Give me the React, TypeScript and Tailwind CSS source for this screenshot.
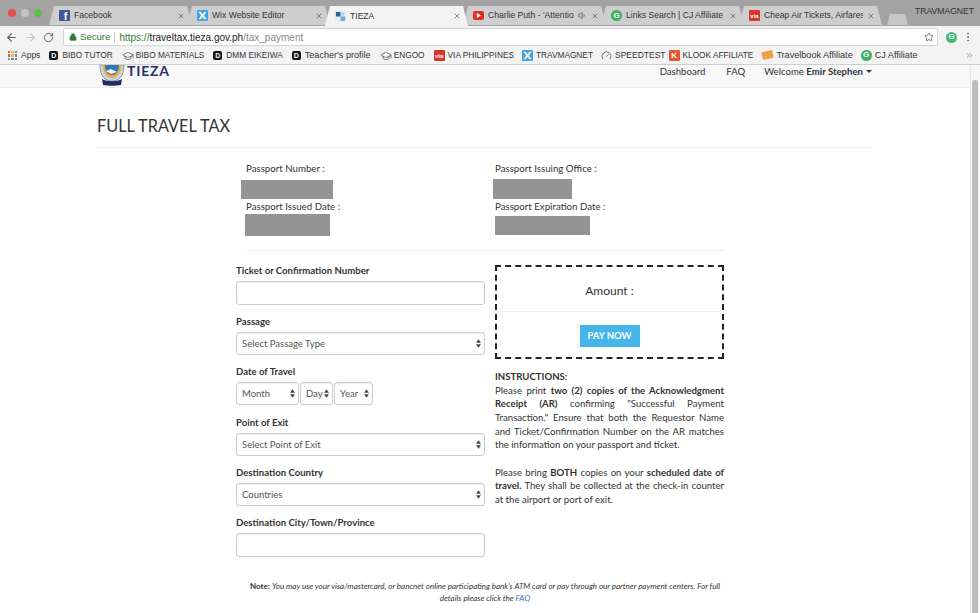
import { ArrowLeft, ArrowRight, RotateCw, Lock, Star, X, Volume1, MoreVertical, Gauge, GraduationCap, ChevronsRight } from 'lucide-react';

function Square({ bg, children }: { bg: string; children?: React.ReactNode }) {
  return (
    <span className={`flex h-[11px] w-[11px] shrink-0 items-center justify-center overflow-hidden rounded-[1px] text-white ${bg}`}>
      {children}
    </span>
  );
}

const FbIcon = () => <Square bg="bg-[#3b5998]"><span className="mt-[2px] ml-[2px] font-['Liberation_Sans',sans-serif] text-[11px] font-bold leading-none">f</span></Square>;
const WixIcon = () => (
  <Square bg="bg-[#3ea1f2]">
    <svg viewBox="0 0 12 12" className="h-[11px] w-[11px]"><path d="M1.5 2 L4 2 L6 4.5 L8 2 L10.5 2 L7.5 6 L10.5 10 L8 10 L6 7.5 L4 10 L1.5 10 L4.5 6 Z" fill="#fff3c4" /></svg>
  </Square>
);
const TiezaIcon = () => (
  <svg viewBox="0 0 12 12" className="h-[11px] w-[11px] shrink-0">
    <rect width="12" height="12" fill="#e4edf5" />
    <path d="M1 1h5v5H1z" fill="#2f5f9e" />
    <path d="M6 6h5v5H6z" fill="#7ea6d0" />
    <path d="M7 2h3v3H7z" fill="#b9cfe4" />
  </svg>
);
const YtIcon = () => (
  <span className="flex h-[9px] w-[11px] shrink-0 items-center justify-center rounded-[2px] bg-[#e52d27]">
    <svg viewBox="0 0 6 6" className="h-[5px] w-[5px]"><path d="M1 0 L6 3 L1 6 Z" fill="#fff" /></svg>
  </span>
);
const CjIcon = () => (
  <span className="flex h-[11px] w-[11px] shrink-0 items-center justify-center rounded-full bg-[#3fae66] font-['Liberation_Sans',sans-serif] text-[8px] font-bold leading-none text-white">G</span>
);
const ViaIcon = () => (
  <Square bg="bg-[#d9352a]"><span className="font-['Liberation_Sans',sans-serif] text-[6px] font-bold leading-none">via</span></Square>
);
const BlackD = () => (
  <span className="mr-px flex h-[9px] w-[9px] shrink-0 items-center justify-center rounded-[2px] bg-[#111] font-['Liberation_Sans',sans-serif] text-[7px] font-bold leading-none text-white">D</span>
);
const Cap = () => <GraduationCap className="-mr-px h-[12px] w-[12px] shrink-0 text-[#555]" strokeWidth={1.5} />;

const tabs = [
  { title: 'Facebook', icon: <FbIcon /> },
  { title: 'Wix Website Editor', icon: <WixIcon /> },
  { title: 'TIEZA', icon: <TiezaIcon />, active: true },
  { title: "Charlie Puth - 'Attention", icon: <YtIcon />, sound: true },
  { title: 'Links Search | CJ Affiliate', icon: <CjIcon /> },
  { title: 'Cheap Air Tickets, Airfares', icon: <ViaIcon /> },
];

function Tab({ title, icon, active, sound }: { title: string; icon: React.ReactNode; active?: boolean; sound?: boolean }) {
  return (
    <div
      className={`-mr-[5px] flex w-[143px] shrink-0 items-center gap-[4px] pr-[7px] pl-[10px] [clip-path:polygon(0_100%,5px_0,calc(100%-5px)_0,100%_100%)] ${active ? 'relative z-10 h-[20px] bg-[#f3f3f3]' : 'mb-px h-[19px] bg-[#cecece]'}`}
    >
      {icon}
      <span className="min-w-0 flex-1 overflow-hidden whitespace-nowrap text-[8.6px] text-[#333]">{title}</span>
      {sound && <Volume1 className="h-[9px] w-[9px] shrink-0 text-[#555]" />}
      <X className="h-[8px] w-[8px] shrink-0 text-[#555]" strokeWidth={2} />
    </div>
  );
}

const bookmarks = [
  { label: 'BIBO TUTOR', icon: <BlackD />, cls: 'ml-[9px] text-[8.3px]' },
  { label: 'BIBO MATERIALS', icon: <Cap />, cls: 'ml-[9px] text-[8.3px]' },
  { label: 'DMM EIKEIWA', icon: <BlackD />, cls: 'ml-[9px] text-[8.3px]' },
  { label: "Teacher's profile", icon: <BlackD />, cls: 'ml-[9px] text-[9.1px]' },
  { label: 'ENGOO', icon: <Cap />, cls: 'ml-[9px] text-[8.3px]' },
  { label: 'VIA PHILIPPINES', icon: <ViaIcon />, cls: 'ml-[9px] text-[8.3px]' },
  { label: 'TRAVMAGNET', icon: <WixIcon />, cls: 'ml-[8px] text-[8.3px]' },
  { label: 'SPEEDTEST', icon: <Gauge className="h-[11px] w-[11px] shrink-0 text-[#444]" strokeWidth={1.5} />, cls: 'ml-[8px] text-[8.5px]' },
  { label: 'KLOOK AFFILIATE', icon: <Square bg="bg-[#e4572e]"><span className="text-[8px] font-bold leading-none">K</span></Square>, cls: 'ml-[3px] text-[8.3px]' },
  { label: 'Travelbook Affiliate', icon: <span className="h-[8px] w-[11px] shrink-0 -rotate-12 rounded-[1px] bg-[#f0a04b]" />, cls: 'ml-[9px] text-[9.1px]' },
  { label: 'CJ Affiliate', icon: <CjIcon />, cls: 'ml-[8px] text-[9.1px]' },
];

function BrowserChrome() {
  return (
    <div className="font-['Liberation_Sans',sans-serif]">
      <div className="flex h-[26px] items-end bg-[#a3a3a3] pl-[8px]">
        <div className="mb-[9px] flex w-[41px] shrink-0 gap-[5px]">
          <span className="h-[8px] w-[8px] rounded-full bg-[#e0524b]" />
          <span className="h-[8px] w-[8px] rounded-full bg-[#c4c4c4]" />
          <span className="h-[8px] w-[8px] rounded-full bg-[#5cc04a]" />
        </div>
        {tabs.map((t) => (
          <Tab key={t.title} {...t} />
        ))}
        <div className="mb-px ml-[10px] h-[11px] w-[21px] shrink-0 bg-[#c6c6c6] [clip-path:polygon(0_100%,3px_0,calc(100%-3px)_0,100%_100%)]" />
        <span className="mb-[10px] ml-[7px] whitespace-nowrap text-[8.6px] leading-[10px] text-[#333]">TRAVMAGNET</span>
      </div>
      <div className="flex h-[20px] items-center bg-[#f3f3f3] pt-[2px]">
        <ArrowLeft className="ml-[5px] h-[13px] w-[13px] text-[#5f5f5f]" strokeWidth={2} />
        <ArrowRight className="ml-[6px] h-[13px] w-[13px] text-[#c2c2c2]" strokeWidth={2} />
        <RotateCw className="ml-[6px] h-[11px] w-[11px] text-[#5f5f5f]" strokeWidth={2} />
        <div className="ml-[9px] flex h-[18px] w-[875px] items-center rounded-[2px] border border-[#d5d5d5] bg-white pl-[5px] text-[10px]">
          <Lock className="h-[8px] w-[8px] text-[#2e7d32]" fill="#2e7d32" strokeWidth={2} />
          <span className="ml-[3px] text-[9.6px] text-[#2e7d32]">Secure</span>
          <span className="mx-[4px] h-[11px] w-px bg-[#c8c8c8]" />
          <span className="text-[#2e7d32]">https://</span>
          <span className="text-[#222]">traveltax.tieza.gov.ph</span>
          <span className="text-[#888]">/tax_payment</span>
          <Star className="mr-[3px] ml-auto h-[10px] w-[10px] text-[#666]" strokeWidth={2} />
        </div>
        <span className="ml-[8px] flex h-[11px] w-[11px] items-center justify-center rounded-full bg-[#3dba77] text-[8px] font-bold text-white">G</span>
        <MoreVertical className="ml-[5px] h-[12px] w-[12px] text-[#666]" strokeWidth={2} />
      </div>
      <div className="flex h-[19px] items-center border-b border-[#cfcfcf] bg-[#f3f3f3] pt-px pl-[8px] text-[8.5px] text-[#333]">
        <span className="grid h-[9px] w-[9px] shrink-0 grid-cols-3 gap-[1px]">
          {['bg-[#e0524b]', 'bg-[#f0b13c]', 'bg-[#5cb85c]', 'bg-[#e0524b]', 'bg-[#f0b13c]', 'bg-[#4a90d9]', 'bg-[#5cb85c]', 'bg-[#4a90d9]', 'bg-[#e0524b]'].map((c, i) => (
            <span key={i} className={c} />
          ))}
        </span>
        <span className="ml-[4px]">Apps</span>
        {bookmarks.map((b) => (
          <span key={b.label} className={`flex items-center gap-[3px] whitespace-nowrap ${b.cls}`}>
            {b.icon}
            {b.label}
          </span>
        ))}
        <ChevronsRight className="mr-[6px] ml-auto h-[9px] w-[9px] text-[#777]" />
      </div>
    </div>
  );
}

function FieldLabel({ children }: { children: React.ReactNode }) {
  return <label className="block h-[16px] text-[9.6px] leading-[12px] font-bold text-[#333]">{children}</label>;
}

function Select({ label, className }: { label: string; className: string }) {
  return (
    <div className={`relative h-[23px] ${className}`}>
      <select className="h-full w-full appearance-none rounded-[3px] border border-[#ccc] bg-white pl-[5px] text-[9.5px] text-[#555] shadow-[inset_0_1px_1px_rgba(0,0,0,0.06)]">
        <option>{label}</option>
      </select>
      <svg viewBox="0 0 6 10" className="absolute top-[7px] right-[4px] h-[9px] w-[5px]">
        <path d="M3 0 L6 4 L0 4 Z M3 10 L0 6 L6 6 Z" fill="#444" />
      </svg>
    </div>
  );
}

function Input() {
  return <input className="block h-[24px] w-full rounded-[3px] border border-[#ccc] bg-white shadow-[inset_0_1px_1px_rgba(0,0,0,0.06)]" />;
}

function Redacted({ className }: { className: string }) {
  return <div className={`bg-[#949494] ${className}`} />;
}

export default function App() {
  return (
    <div className="h-[613px] w-[980px] overflow-hidden bg-white font-['Lato',sans-serif] text-[#333]">
      <BrowserChrome />
      <div className="flex h-[548px]">
        <div className="min-w-0 flex-1">
          <nav className="flex h-[23px] items-start border-b border-[#ececec] bg-[#f8f8f8] pl-[98px]">
            <svg viewBox="0 0 28 21" className="h-[21px] w-[28px] shrink-0">
              <path d="M2 0 C2 10 6 16 14 16 C22 16 26 10 26 0 Z" fill="#c9d3de" stroke="#7b8aa0" strokeWidth="0.8" />
              <path d="M5 0 C5 8 9 13 14 13 C19 13 23 8 23 0 Z" fill="#e9a93c" />
              <path d="M7 0 C7 6 10 10 14 10 C18 10 21 6 21 0 Z" fill="#2f78b7" />
              <path d="M8 6 L13 4 L19 7 L13 9 Z" fill="#f4f4f4" />
              <path d="M4 14 C9 17 19 17 24 14 L23 20 C18 21 10 21 5 20 Z" fill="#232c66" />
            </svg>
            <span className="-mt-[1px] ml-px text-[14px] leading-[14px] font-bold tracking-[0.8px] text-[#27306b]">TIEZA</span>
            <div className="ml-auto flex items-center pt-[1px] pr-[98px] text-[9.6px] leading-[11px] text-[#333]">
              <span>Dashboard</span>
              <span className="ml-[21px]">FAQ</span>
              <span className="ml-[19px]">Welcome <b>Emir Stephen</b></span>
              <span className="ml-[3px] h-0 w-0 border-x-[3px] border-t-[3px] border-x-transparent border-t-[#333]" />
            </div>
          </nav>
          <main className="mx-[97px] w-[776px]">
            <h1 className="pt-[28px] text-[16.3px] leading-[20px] text-[#333]">FULL TRAVEL TAX</h1>
            <div className="mt-[11px] h-px bg-[#eeeeee]" />
            <section className="ml-[139px] w-[488px] text-[9.7px] leading-[12px]">
              <div className="flex pt-[14px]">
                <div className="w-[259px]">
                  <p className="pl-[10px]">Passport Number :</p>
                  <Redacted className="mt-[6px] ml-[5px] h-[19px] w-[92px]" />
                  <p className="mt-[1px] pl-[10px]">Passport Issued Date :</p>
                  <Redacted className="mt-[2px] ml-[9px] h-[22px] w-[85px]" />
                </div>
                <div>
                  <p>Passport Issuing Office :</p>
                  <Redacted className="mt-[5px] -ml-[2px] h-[20px] w-[79px]" />
                  <p className="mt-[1px]">Passport Expiration Date :</p>
                  <Redacted className="mt-[4px] h-[19px] w-[95px]" />
                </div>
              </div>
              <div className="mt-[14px] ml-[10px] h-px bg-[#eeeeee]" />
              <div className="mt-[14px] flex items-start gap-[10px]">
                <div className="w-[249px]">
                  <FieldLabel>Ticket or Confirmation Number</FieldLabel>
                  <Input />
                  <div className="mt-[11px]">
                    <FieldLabel>Passage</FieldLabel>
                    <Select label="Select Passage Type" className="w-full" />
                  </div>
                  <div className="mt-[11px]">
                    <FieldLabel>Date of Travel</FieldLabel>
                    <div className="flex gap-px">
                      <Select label="Month" className="w-[63px]" />
                      <Select label="Day" className="w-[33px]" />
                      <Select label="Year" className="w-[39px]" />
                    </div>
                  </div>
                  <div className="mt-[12px]">
                    <FieldLabel>Point of Exit</FieldLabel>
                    <Select label="Select Point of Exit" className="w-full" />
                  </div>
                  <div className="mt-[11px]">
                    <FieldLabel>Destination Country</FieldLabel>
                    <Select label="Countries" className="w-full" />
                  </div>
                  <div className="mt-[11px]">
                    <FieldLabel>Destination City/Town/Province</FieldLabel>
                    <Input />
                  </div>
                </div>
                <div className="w-[229px]">
                  <div className="h-[94px] border-2 border-dashed border-[#222] px-[3px]">
                    <p className="h-[44px] pt-[16px] text-center text-[12px] leading-[16px] text-[#333]">Amount :</p>
                    <div className="h-px bg-[#eeeeee]" />
                    <button className="mx-auto mt-[13px] block h-[22px] w-[60px] bg-[#45b6e9] text-[9.5px] font-bold text-white">PAY NOW</button>
                  </div>
                  <div className="mt-[11px] text-justify text-[9.6px] leading-[13.65px] text-[#333]">
                    <p className="font-bold">INSTRUCTIONS:</p>
                    <p>
                      Please print <b>two (2) copies of the Acknowledgment Receipt (AR)</b> confirming "Successful Payment Transaction." Ensure that both the Requestor Name and Ticket/Confirmation Number on the AR matches the information on your passport and ticket.
                    </p>
                    <p className="mt-[13.65px]">
                      Please bring <b>BOTH</b> copies on your <b>scheduled date of travel.</b> They shall be collected at the check-in counter at the airport or port of exit.
                    </p>
                  </div>
                </div>
              </div>
              <p className="mt-[24px] ml-[9px] w-[480px] text-center text-[8px] leading-[11.6px]">
                <b>Note:</b> <i>You may use your visa/mastercard, or bancnet online participating bank's ATM card or pay through our partner payment centers. For full details please click the </i>
                <a className="text-[#337ab7] italic">FAQ</a>
              </p>
            </section>
          </main>
        </div>
        <div className="w-[10px] shrink-0 border-l border-[#e6e6e6] bg-[#f7f7f7] pt-[15px] pl-[1px]">
          <div className="h-[533px] w-[6px] rounded-t-full bg-[#bcbcbc]" />
        </div>
      </div>
    </div>
  );
}
